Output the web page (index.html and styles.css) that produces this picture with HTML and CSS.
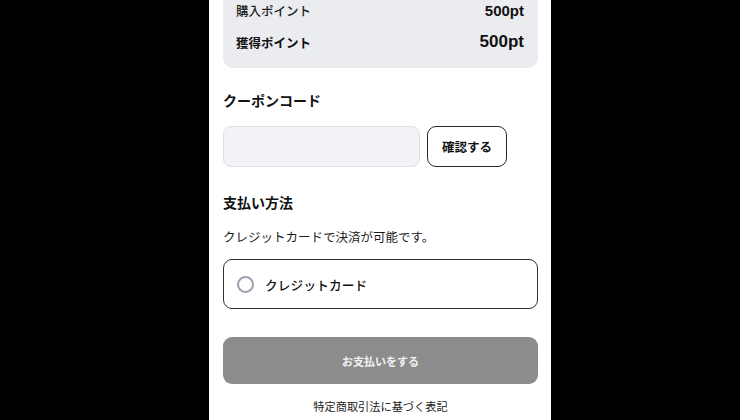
FILE: index.html
```html
<!DOCTYPE html>
<html lang="ja">
<head>
<meta charset="utf-8">
<link rel="stylesheet" href="styles.css">
</head>
<body>
<main class="page">
  <section class="summary">
    <div class="row">
      <span class="label">購入ポイント</span>
      <span class="value">500pt</span>
    </div>
    <div class="row">
      <span class="label strong">獲得ポイント</span>
      <span class="value large">500pt</span>
    </div>
  </section>

  <h2 class="heading coupon-heading">クーポンコード</h2>
  <div class="coupon">
    <input class="coupon-input" type="text" aria-label="クーポンコード">
    <button class="confirm" type="button">確認する</button>
  </div>

  <h2 class="heading pay-heading">支払い方法</h2>
  <p class="desc">クレジットカードで決済が可能です。</p>

  <label class="option">
    <span class="radio"></span>
    <span class="option-text">クレジットカード</span>
  </label>

  <button class="pay" type="button">お支払いをする</button>

  <p class="footer">特定商取引法に基づく表記</p>
</main>
</body>
</html>
```

FILE: styles.css
```css
html, body {
  margin: 0;
  padding: 0;
  background: #000;
  height: 100%;
  overflow: hidden;
}

body {
  font-family: "Liberation Sans", "Noto Sans CJK JP", sans-serif;
  color: #1a1a1a;
}

.page {
  box-sizing: border-box;
  width: 342px;
  margin-left: 209px;
  margin-top: -16px;
  min-height: 436px;
  background: #fff;
  padding: 0 13px 0 14px;
  display: flex;
  flex-direction: column;
}

.summary {
  background: #ebecf0;
  border-radius: 0 0 10px 10px;
  padding: 14px 14px 14px 13px;
  display: flex;
  flex-direction: column;
  gap: 8px;
}

.row {
  display: flex;
  justify-content: space-between;
  align-items: center;
  height: 24px;
}

.label {
  font-family: "Noto Sans CJK JP", sans-serif;
  font-size: 12.5px;
  font-weight: 500;
  color: #222;
}

.label.strong {
  font-weight: 700;
  color: #111;
}

.value {
  font-size: 15px;
  font-weight: 700;
  color: #111;
}

.value.large {
  font-size: 17px;
}

.heading {
  font-family: "Noto Sans CJK JP", sans-serif;
  font-size: 14px;
  font-weight: 700;
  line-height: 20px;
  margin: 0;
  color: #111;
}

.coupon-heading {
  margin-top: 22px;
}

.coupon {
  display: flex;
  gap: 7px;
  margin-top: 16px;
  height: 41px;
}

.coupon-input {
  box-sizing: border-box;
  width: 197px;
  height: 41px;
  margin: 0;
  background: #f1f3f6;
  border: 1px solid #dde1e7;
  border-radius: 8px;
  outline: none;
}

.confirm {
  box-sizing: border-box;
  width: 80px;
  height: 41px;
  margin: 0;
  padding: 0;
  background: #fff;
  border: 1.5px solid #2a2a2a;
  border-radius: 9px;
  font-family: "Noto Sans CJK JP", sans-serif;
  font-size: 12.5px;
  font-weight: 700;
  color: #111;
}

.pay-heading {
  margin-top: 25px;
}

.desc {
  font-family: "Noto Sans CJK JP", sans-serif;
  font-size: 12.5px;
  line-height: 18px;
  margin: 16px 0 0;
  color: #1a1a1a;
}

.option {
  box-sizing: border-box;
  height: 50px;
  margin-top: 13px;
  border: 1.5px solid #333;
  border-radius: 9px;
  display: flex;
  align-items: center;
  padding-left: 13px;
  gap: 11px;
}

.radio {
  box-sizing: border-box;
  width: 17px;
  height: 17px;
  border: 2px solid #9aa2ae;
  border-radius: 50%;
  flex: none;
}

.option-text {
  font-family: "Noto Sans CJK JP", sans-serif;
  font-size: 12.6px;
  font-weight: 500;
  color: #111;
  letter-spacing: 0.2px;
}

.pay {
  box-sizing: border-box;
  height: 47px;
  margin: 28px 0 0;
  padding: 0;
  border: none;
  border-radius: 9px;
  background: #8c8c8c;
  font-family: "Noto Sans CJK JP", sans-serif;
  font-size: 11px;
  font-weight: 700;
  color: #f2f2f2;
}

.footer {
  font-family: "Noto Sans CJK JP", sans-serif;
  font-size: 11.2px;
  line-height: 16px;
  margin: 14px 0 0;
  text-align: center;
  color: #222;
}
```
